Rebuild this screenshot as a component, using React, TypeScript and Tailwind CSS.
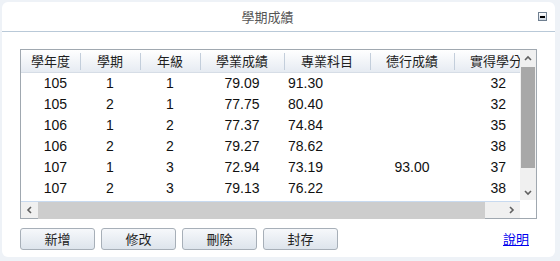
import React from "react";

const rows = [
  ["105", "1", "1", "79.09", "91.30", "", "32"],
  ["105", "2", "1", "77.75", "80.40", "", "32"],
  ["106", "1", "2", "77.37", "74.84", "", "35"],
  ["106", "2", "2", "79.27", "78.62", "", "38"],
  ["107", "1", "3", "72.94", "73.19", "93.00", "37"],
  ["107", "2", "3", "79.13", "76.22", "", "38"],
];

const headers = ["學年度", "學期", "年級", "學業成績", "專業科目", "德行成績", "實得學分"];

// column widths and body alignment, left to right
const cols = [
  { w: "w-[59px]", cell: "justify-end pr-[13px]" },
  { w: "w-[60px]", cell: "justify-center" },
  { w: "w-[60px]", cell: "justify-center" },
  { w: "w-[84px]", cell: "justify-center" },
  { w: "w-[86px]", cell: "justify-start pl-[4px]" },
  { w: "w-[84px]", cell: "justify-center" },
  { w: "w-[84px]", cell: "justify-end pr-[32px]" },
];

const cjk = "font-['Segoe_UI','Noto_Sans_CJK_TC',sans-serif]";
const num = "font-['Liberation_Sans','Noto_Sans_CJK_TC',sans-serif]";

function Chevron({ dir }: { dir: "up" | "down" | "left" | "right" }) {
  const d = {
    up: "M2 6 L5 3 L8 6",
    down: "M2 4 L5 7 L8 4",
    left: "M6 2 L3 5 L6 8",
    right: "M4 2 L7 5 L4 8",
  }[dir];
  return (
    <svg width="10" height="10" viewBox="0 0 10 10">
      <path d={d} fill="none" stroke="#606060" strokeWidth="1.6" />
    </svg>
  );
}

function Btn({ label }: { label: string }) {
  return (
    <button
      className={`w-[75px] h-[22px] rounded-[3px] border border-[#a7afb8] bg-gradient-to-b from-[#f6f8fb] to-[#dde4ec] text-[13px] text-[#222] ${cjk} flex items-center justify-center`}
    >
      {label}
    </button>
  );
}

export default function App() {
  return (
    <div className="w-[560px] h-[261px] bg-[#eef2f7] pl-[2px] pt-[2px]">
      <div className="w-[553px] h-[255px] bg-white rounded-[6px] flex flex-col">
        {/* title bar */}
        <div className="h-[30px] border-b border-[#b9c9d8] flex items-center relative">
          <div className={`flex-1 text-center pr-[22px] text-[13px] text-[#555] ${cjk}`}>學期成績</div>
          <div className="absolute left-[536px] top-[10px] w-[9px] h-[9px] border border-[#6f7f90] bg-gradient-to-b from-white to-[#cdd6e0] flex items-center justify-center">
            <div className="w-[5px] h-[2px] bg-black" />
          </div>
        </div>

        {/* grid */}
        <div className="mt-[17px] ml-[18px] w-[517px] h-[170px] border border-[#a0a8b0] flex">
          <div className="w-[499px] flex flex-col">
            <div className="h-[152px] overflow-hidden">
              <div className="w-[517px]">
                <div className="h-[23px] flex bg-gradient-to-b from-white to-[#e6ebf2] border-b border-[#d6dde6]">
                  {headers.map((h, i) => (
                    <div
                      key={h}
                      className={`${cols[i].w} shrink-0 relative flex items-center justify-center text-[13px] text-[#1e1e1e] ${cjk} ${
                        i > 0 ? "before:absolute before:left-0 before:top-[3px] before:h-[17px] before:w-px before:bg-[#c3cedb]" : ""
                      }`}
                    >
                      {h}
                    </div>
                  ))}
                </div>
                {rows.map((r, ri) => (
                  <div key={ri} className="h-[21px] flex">
                    {r.map((c, ci) => (
                      <div
                        key={ci}
                        className={`${cols[ci].w} ${cols[ci].cell} shrink-0 flex items-center text-[14px] text-[#111] ${num}`}
                      >
                        {c}
                      </div>
                    ))}
                  </div>
                ))}
              </div>
            </div>
            {/* horizontal scrollbar */}
            <div className="h-[17px] border-t border-[#c8daf0] bg-[#f0f0f0] flex items-center">
              <div className="w-[17px] flex justify-center">
                <Chevron dir="left" />
              </div>
              <div className="w-[447px] h-[17px] bg-[#cdcdcd]" />
              <div className="flex-1 flex justify-end pr-[4px]">
                <Chevron dir="right" />
              </div>
            </div>
          </div>
          {/* vertical scrollbar */}
          <div className="w-[16px] flex flex-col">
            <div className="h-[150px] bg-[#f0f0f0] flex flex-col items-center">
              <div className="h-[17px] flex items-center">
                <Chevron dir="up" />
              </div>
              <div className="w-[14px] h-[101px] bg-[#a8a8a8]" />
              <div className="flex-1 flex items-end pb-[3px]">
                <Chevron dir="down" />
              </div>
            </div>
            <div className="flex-1 bg-white" />
          </div>
        </div>

        {/* buttons */}
        <div className="mt-[9px] ml-[18px] mr-[26px] flex items-center gap-[6px]">
          <Btn label="新增" />
          <Btn label="修改" />
          <Btn label="刪除" />
          <Btn label="封存" />
          <a href="#" className={`ml-auto text-[13px] text-[#0000ee] underline ${cjk}`}>
            說明
          </a>
        </div>
      </div>
    </div>
  );
}
